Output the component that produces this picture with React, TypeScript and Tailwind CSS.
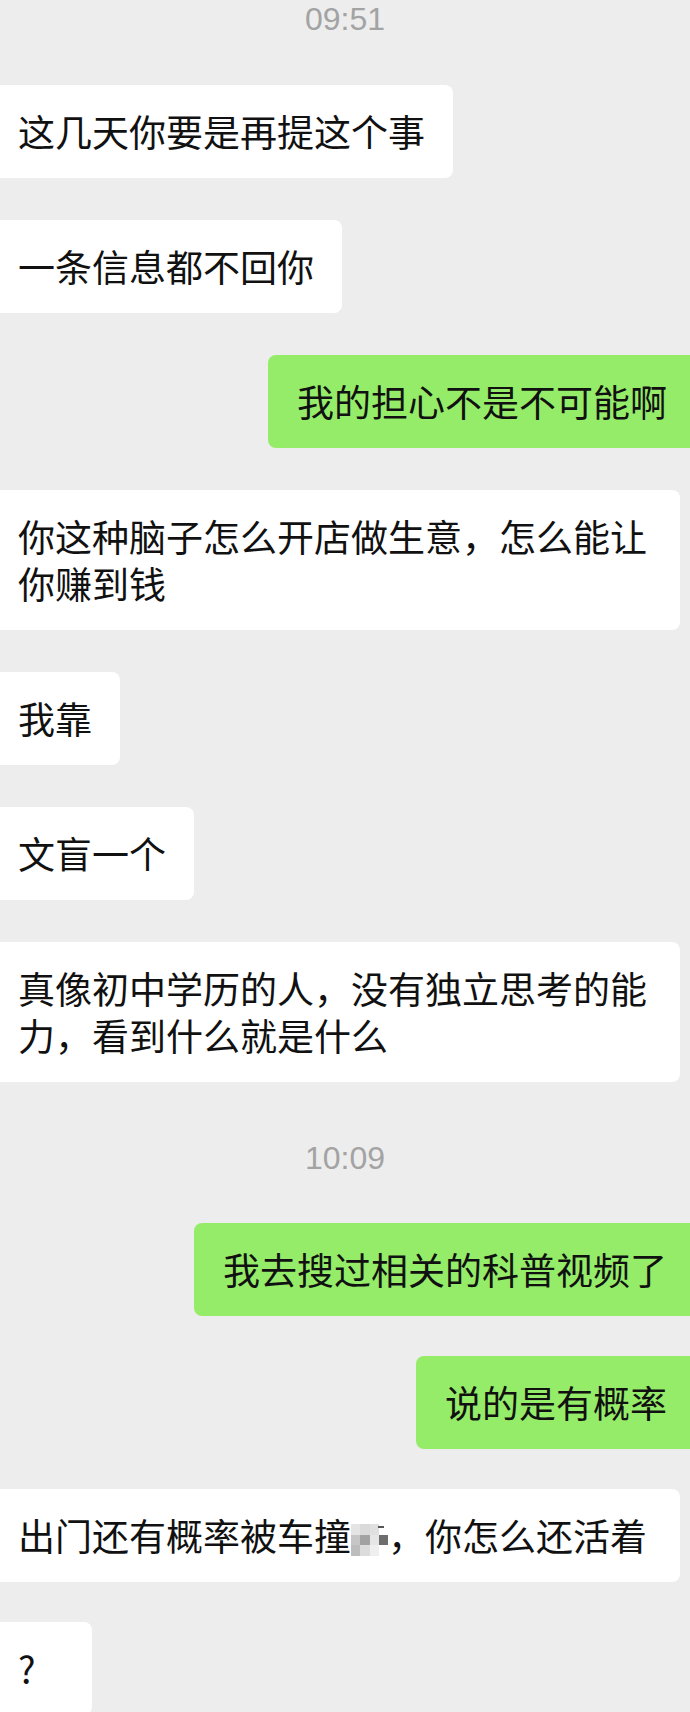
import type { ReactNode } from 'react'

type Msg =
  | { kind: 'time'; text: string; first?: boolean }
  | { kind: 'in'; text: ReactNode; wide?: boolean; minW?: boolean; tight?: boolean }
  | { kind: 'out'; text: string; tight?: boolean }

// pixelated patch that hides one character
function Mosaic() {
  const cells = [
    'bg-[#e4e4e4]', 'bg-[#dadada]', 'bg-[#e0e0e0]', 'bg-white',
    'bg-[#c6c6c6]', 'bg-[#a2a2a2]', 'bg-[#e6e6e6]', 'bg-[#6e6e6e]',
    'bg-[#bdbdbd]', 'bg-[#dcdcdc]', 'bg-[#efefef]', 'bg-white',
  ]
  return (
    <span className="relative mt-[12px] inline-grid h-[32px] w-[37px] grid-cols-4 grid-rows-3 align-top">
      {cells.map((c, i) => (
        <span key={i} className={c} />
      ))}
      <span className="absolute right-[4px] top-[2px] h-[2px] w-[6px] bg-[#555]" />
    </span>
  )
}

const messages: Msg[] = [
  { kind: 'time', text: '09:51', first: true },
  { kind: 'in', text: '这几天你要是再提这个事' },
  { kind: 'in', text: '一条信息都不回你' },
  { kind: 'out', text: '我的担心不是不可能啊' },
  { kind: 'in', text: '你这种脑子怎么开店做生意，怎么能让你赚到钱' },
  { kind: 'in', text: '我靠' },
  { kind: 'in', text: '文盲一个' },
  { kind: 'in', text: '真像初中学历的人，没有独立思考的能力，看到什么就是什么' },
  { kind: 'time', text: '10:09' },
  { kind: 'out', text: '我去搜过相关的科普视频了' },
  { kind: 'out', text: '说的是有概率', tight: true },
  {
    kind: 'in',
    wide: true,
    tight: true,
    text: (
      <>
        出门还有概率被车撞
        <Mosaic />
        ，你怎么还活着
      </>
    ),
  },
  { kind: 'in', text: '?', minW: true, tight: true },
]

function TimeStamp({ text, first }: { text: string; first?: boolean }) {
  return (
    <div
      className={`flex h-[38px] items-center justify-center font-['Liberation_Sans',sans-serif] text-[32px] leading-none text-[#a3a3a3] ${
        first ? 'mt-0 mb-[47px]' : 'mt-[57px] mb-[46px]'
      }`}
    >
      {text}
    </div>
  )
}

function Bubble({ msg }: { msg: Msg }) {
  if (msg.kind === 'out') {
    return (
      <div className="self-end rounded-l-[8px] bg-[#95ec69] py-[23px] pl-[29px] pr-[23px] text-[37px] leading-[47px] text-[#111]">
        {msg.text}
      </div>
    )
  }
  if (msg.kind === 'in') {
    return (
      <div
        className={`max-w-[680px] self-start rounded-r-[8px] bg-white py-[23px] pl-[18px] pr-[28px] text-[37px] leading-[47px] text-[#111] ${
          msg.wide ? 'w-[680px]' : ''
        } ${msg.minW ? 'min-w-[92px]' : ''}`}
      >
        {msg.text}
      </div>
    )
  }
  return null
}

export default function App() {
  const rows: ReactNode[] = []
  messages.forEach((m, i) => {
    if (m.kind === 'time') {
      rows.push(<TimeStamp key={i} text={m.text} first={m.first} />)
      return
    }
    const prev = messages[i - 1]
    let gap = ''
    if (prev && prev.kind !== 'time') gap = m.tight ? 'mt-[40px]' : 'mt-[42px]'
    rows.push(
      <div key={i} className={`flex flex-col ${gap}`}>
        <Bubble msg={m} />
      </div>,
    )
  })

  return (
    <div className="h-[1712px] w-[690px] overflow-hidden bg-[#ededed] font-['Noto_Sans_CJK_SC',sans-serif]">
      <div className="flex flex-col">{rows}</div>
    </div>
  )
}
